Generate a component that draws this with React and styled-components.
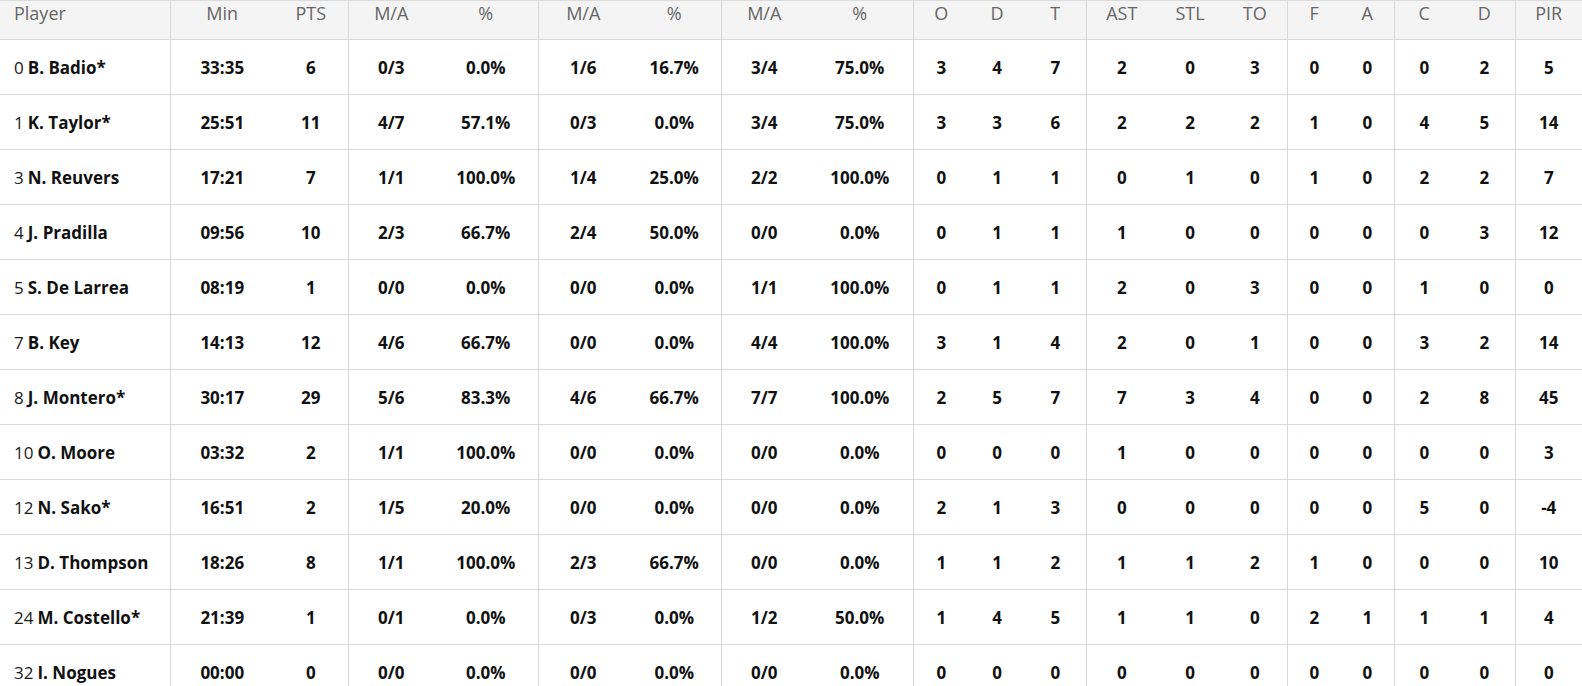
import React from "react";
import styled, { createGlobalStyle } from "styled-components";

const Global = createGlobalStyle`
  html, body { margin: 0; padding: 0; background: #fff; overflow: hidden; }
  body { font-family: "Open Sans", "Lato", sans-serif; }
`;

const COLS = [170, 104, 74, 86, 104, 90, 93, 86, 106, 56, 56, 61, 71, 66, 64, 54, 53, 60, 61, 67];
const GROUP_START = new Set([1, 3, 5, 7, 9, 12, 15, 17, 19]);
const HEADERS = ["Player", "Min", "PTS", "M/A", "%", "M/A", "%", "M/A", "%", "O", "D", "T", "AST", "STL", "TO", "F", "A", "C", "D", "PIR"];

const ROWS = [
  ["0", "B. Badio*", "33:35", "6", "0/3", "0.0%", "1/6", "16.7%", "3/4", "75.0%", "3", "4", "7", "2", "0", "3", "0", "0", "0", "2", "5"],
  ["1", "K. Taylor*", "25:51", "11", "4/7", "57.1%", "0/3", "0.0%", "3/4", "75.0%", "3", "3", "6", "2", "2", "2", "1", "0", "4", "5", "14"],
  ["3", "N. Reuvers", "17:21", "7", "1/1", "100.0%", "1/4", "25.0%", "2/2", "100.0%", "0", "1", "1", "0", "1", "0", "1", "0", "2", "2", "7"],
  ["4", "J. Pradilla", "09:56", "10", "2/3", "66.7%", "2/4", "50.0%", "0/0", "0.0%", "0", "1", "1", "1", "0", "0", "0", "0", "0", "3", "12"],
  ["5", "S. De Larrea", "08:19", "1", "0/0", "0.0%", "0/0", "0.0%", "1/1", "100.0%", "0", "1", "1", "2", "0", "3", "0", "0", "1", "0", "0"],
  ["7", "B. Key", "14:13", "12", "4/6", "66.7%", "0/0", "0.0%", "4/4", "100.0%", "3", "1", "4", "2", "0", "1", "0", "0", "3", "2", "14"],
  ["8", "J. Montero*", "30:17", "29", "5/6", "83.3%", "4/6", "66.7%", "7/7", "100.0%", "2", "5", "7", "7", "3", "4", "0", "0", "2", "8", "45"],
  ["10", "O. Moore", "03:32", "2", "1/1", "100.0%", "0/0", "0.0%", "0/0", "0.0%", "0", "0", "0", "1", "0", "0", "0", "0", "0", "0", "3"],
  ["12", "N. Sako*", "16:51", "2", "1/5", "20.0%", "0/0", "0.0%", "0/0", "0.0%", "2", "1", "3", "0", "0", "0", "0", "0", "5", "0", "-4"],
  ["13", "D. Thompson", "18:26", "8", "1/1", "100.0%", "2/3", "66.7%", "0/0", "0.0%", "1", "1", "2", "1", "1", "2", "1", "0", "0", "0", "10"],
  ["24", "M. Costello*", "21:39", "1", "0/1", "0.0%", "0/3", "0.0%", "1/2", "50.0%", "1", "4", "5", "1", "1", "0", "2", "1", "1", "1", "4"],
  ["32", "I. Nogues", "00:00", "0", "0/0", "0.0%", "0/0", "0.0%", "0/0", "0.0%", "0", "0", "0", "0", "0", "0", "0", "0", "0", "0", "0"],
];

const Table = styled.table`
  width: 1582px;
  table-layout: fixed;
  border-collapse: collapse;
  border-top: 1px solid #dcdcdc;
  font-size: 17px;
  color: #111;
`;

const HeadRow = styled.tr`
  height: 39px;
  background: #f4f4f4;
  border-bottom: 1px solid #d9d9d9;
`;

const HeadCell = styled.th`
  padding: 0;
  vertical-align: top;
  font-size: 18px;
  font-weight: 400;
  color: #666;
  text-align: ${(p) => (p.$left ? "left" : "center")};
  padding-left: ${(p) => (p.$left ? "14px" : "0")};
  border-left: ${(p) => (p.$group ? "1px solid #d9d9d9" : "none")};
  line-height: 24px;
`;

const BodyRow = styled.tr`
  height: 55px;
  border-bottom: 1px solid #d9d9d9;
`;

const Cell = styled.td`
  padding: 0;
  text-align: center;
  font-weight: 700;
  border-left: ${(p) => (p.$group ? "1px solid #d9d9d9" : "none")};
  white-space: nowrap;
`;

const PlayerCell = styled.td`
  padding: 0 0 0 14px;
  text-align: left;
  white-space: nowrap;
`;

const Number = styled.span`
  font-weight: 400;
  color: #1a1a1a;
  margin-right: 4px;
`;

const Name = styled.span`
  font-weight: 700;
`;

export default function App() {
  return (
    <>
      <Global />
      <Table>
        <colgroup>
          {COLS.map((w, i) => (
            <col key={i} style={{ width: w }} />
          ))}
        </colgroup>
        <thead>
          <HeadRow>
            {HEADERS.map((h, i) => (
              <HeadCell key={i} $left={i === 0} $group={GROUP_START.has(i)}>
                {h}
              </HeadCell>
            ))}
          </HeadRow>
        </thead>
        <tbody>
          {ROWS.map((r, ri) => (
            <BodyRow key={ri}>
              <PlayerCell>
                <Number>{r[0]}</Number>
                <Name>{r[1]}</Name>
              </PlayerCell>
              {r.slice(2).map((v, ci) => (
                <Cell key={ci} $group={GROUP_START.has(ci + 1)}>
                  {v}
                </Cell>
              ))}
            </BodyRow>
          ))}
        </tbody>
      </Table>
    </>
  );
}
